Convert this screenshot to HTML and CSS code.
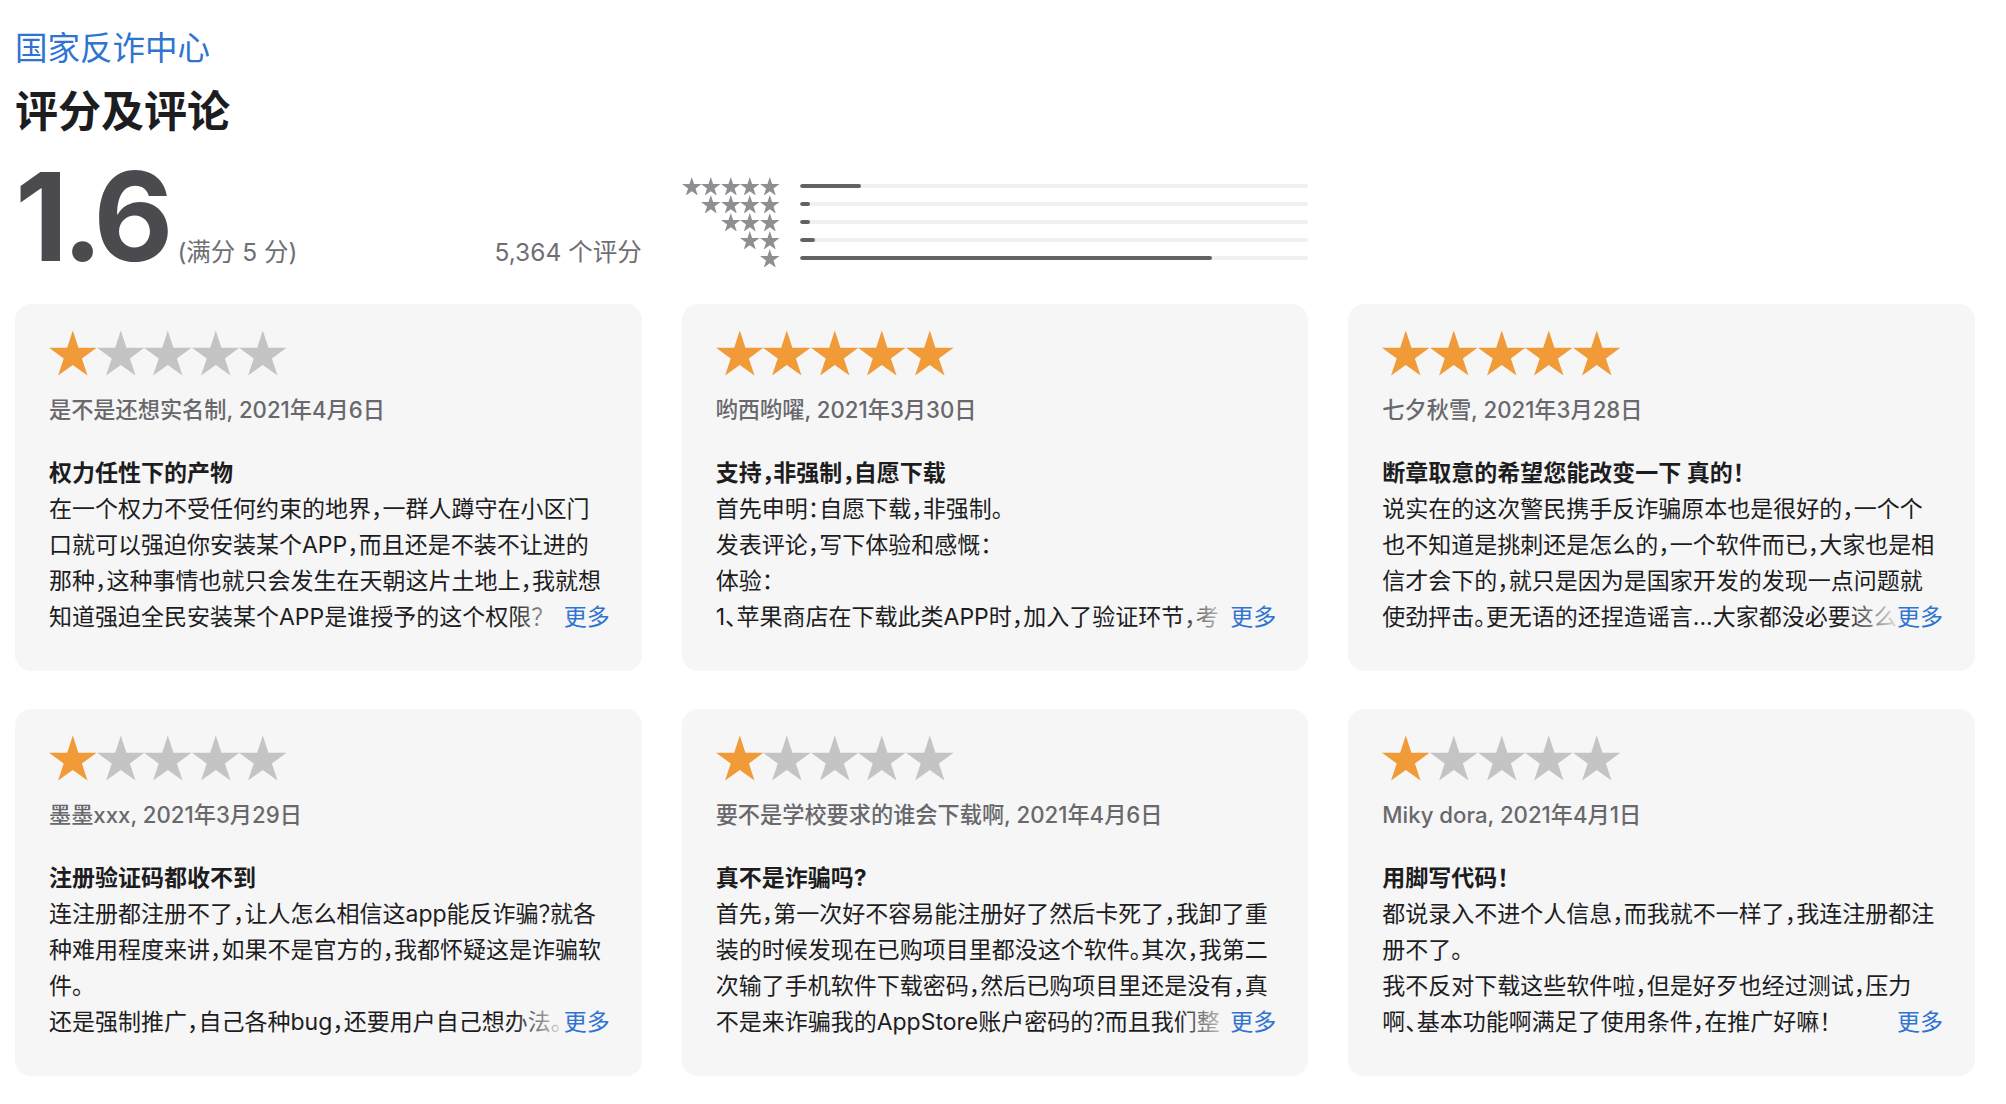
FILE: index.html
```html
<!DOCTYPE html>
<html lang="zh-CN">
<head>
<meta charset="utf-8">
<title>评分及评论</title>
<link rel="stylesheet" href="styles.css">
</head>
<body>
<svg class="defs" width="0" height="0" aria-hidden="true">
  <symbol id="star" viewBox="0 0 100 95">
    <path d="M50 0 L61.8 36.3 L100 36.3 L69.1 58.8 L80.9 95 L50 72.6 L19.1 95 L30.9 58.8 L0 36.3 L38.2 36.3 Z"/>
  </symbol>
</svg>
<div class="page">
  <a class="app-link" href="#">国家反诈中心</a>
  <h2 class="section-title">评分及评论</h2>

  <div class="grid stats">
    <div class="averages">
      <div class="avg-main">
        <span class="avg-num">1.6</span>
        <span class="avg-out">(满分 5 分)</span>
      </div>
      <div class="avg-count">5,364 个评分</div>
    </div>
    <div class="histogram">
      <div class="hrow">
        <div class="hstars"><svg><use href="#star"/></svg><svg><use href="#star"/></svg><svg><use href="#star"/></svg><svg><use href="#star"/></svg><svg><use href="#star"/></svg></div>
        <div class="hbar"><div class="hfill" style="width:12%"></div></div>
      </div>
      <div class="hrow">
        <div class="hstars"><svg><use href="#star"/></svg><svg><use href="#star"/></svg><svg><use href="#star"/></svg><svg><use href="#star"/></svg></div>
        <div class="hbar"><div class="hfill" style="width:2%"></div></div>
      </div>
      <div class="hrow">
        <div class="hstars"><svg><use href="#star"/></svg><svg><use href="#star"/></svg><svg><use href="#star"/></svg></div>
        <div class="hbar"><div class="hfill" style="width:2%"></div></div>
      </div>
      <div class="hrow">
        <div class="hstars"><svg><use href="#star"/></svg><svg><use href="#star"/></svg></div>
        <div class="hbar"><div class="hfill" style="width:3%"></div></div>
      </div>
      <div class="hrow">
        <div class="hstars"><svg><use href="#star"/></svg></div>
        <div class="hbar"><div class="hfill" style="width:81%"></div></div>
      </div>
    </div>
  </div>

  <div class="grid reviews">
    <div class="card">
      <div class="stars">
        <svg class="on"><use href="#star"/></svg><svg><use href="#star"/></svg><svg><use href="#star"/></svg><svg><use href="#star"/></svg><svg><use href="#star"/></svg>
      </div>
      <div class="byline">是不是还想实名制, 2021年4月6日</div>
      <h3 class="rtitle">权力任性下的产物</h3>
      <div class="rbody">
        <div class="line">在一个权力不受任何约束的地界，一群人蹲守在小区门</div>
        <div class="line">口就可以强迫你安装某个APP，而且还是不装不让进的</div>
        <div class="line">那种，这种事情也就只会发生在天朝这片土地上，我就想</div>
        <div class="line last">知道强迫全民安装某个APP是谁授予的这个权限？</div>
        <a class="more" href="#">更多</a>
      </div>
    </div>

    <div class="card">
      <div class="stars">
        <svg class="on"><use href="#star"/></svg><svg class="on"><use href="#star"/></svg><svg class="on"><use href="#star"/></svg><svg class="on"><use href="#star"/></svg><svg class="on"><use href="#star"/></svg>
      </div>
      <div class="byline">哟西哟嚁, 2021年3月30日</div>
      <h3 class="rtitle">支持，非强制，自愿下载</h3>
      <div class="rbody">
        <div class="line">首先申明：自愿下载，非强制。</div>
        <div class="line">发表评论，写下体验和感慨：</div>
        <div class="line">体验：</div>
        <div class="line last">1、苹果商店在下载此类APP时，加入了验证环节，考</div>
        <a class="more" href="#">更多</a>
      </div>
    </div>

    <div class="card">
      <div class="stars">
        <svg class="on"><use href="#star"/></svg><svg class="on"><use href="#star"/></svg><svg class="on"><use href="#star"/></svg><svg class="on"><use href="#star"/></svg><svg class="on"><use href="#star"/></svg>
      </div>
      <div class="byline">七夕秋雪, 2021年3月28日</div>
      <h3 class="rtitle">断章取意的希望您能改变一下 真的！</h3>
      <div class="rbody">
        <div class="line">说实在的这次警民携手反诈骗原本也是很好的，一个个</div>
        <div class="line">也不知道是挑刺还是怎么的，一个软件而已，大家也是相</div>
        <div class="line">信才会下的，就只是因为是国家开发的发现一点问题就</div>
        <div class="line last">使劲抨击。更无语的还捏造谣言...大家都没必要这么</div>
        <a class="more" href="#">更多</a>
      </div>
    </div>

    <div class="card">
      <div class="stars">
        <svg class="on"><use href="#star"/></svg><svg><use href="#star"/></svg><svg><use href="#star"/></svg><svg><use href="#star"/></svg><svg><use href="#star"/></svg>
      </div>
      <div class="byline">墨墨xxx, 2021年3月29日</div>
      <h3 class="rtitle">注册验证码都收不到</h3>
      <div class="rbody">
        <div class="line">连注册都注册不了，让人怎么相信这app能反诈骗？就各</div>
        <div class="line">种难用程度来讲，如果不是官方的，我都怀疑这是诈骗软</div>
        <div class="line">件。</div>
        <div class="line last">还是强制推广，自己各种bug，还要用户自己想办法。</div>
        <a class="more" href="#">更多</a>
      </div>
    </div>

    <div class="card">
      <div class="stars">
        <svg class="on"><use href="#star"/></svg><svg><use href="#star"/></svg><svg><use href="#star"/></svg><svg><use href="#star"/></svg><svg><use href="#star"/></svg>
      </div>
      <div class="byline">要不是学校要求的谁会下载啊, 2021年4月6日</div>
      <h3 class="rtitle">真不是诈骗吗?</h3>
      <div class="rbody">
        <div class="line">首先，第一次好不容易能注册好了然后卡死了，我卸了重</div>
        <div class="line">装的时候发现在已购项目里都没这个软件。其次，我第二</div>
        <div class="line">次输了手机软件下载密码，然后已购项目里还是没有，真</div>
        <div class="line last">不是来诈骗我的AppStore账户密码的？而且我们整</div>
        <a class="more" href="#">更多</a>
      </div>
    </div>

    <div class="card">
      <div class="stars">
        <svg class="on"><use href="#star"/></svg><svg><use href="#star"/></svg><svg><use href="#star"/></svg><svg><use href="#star"/></svg><svg><use href="#star"/></svg>
      </div>
      <div class="byline">Miky dora, 2021年4月1日</div>
      <h3 class="rtitle">用脚写代码！</h3>
      <div class="rbody">
        <div class="line">都说录入不进个人信息，而我就不一样了，我连注册都注</div>
        <div class="line">册不了。</div>
        <div class="line">我不反对下载这些软件啦，但是好歹也经过测试，压力</div>
        <div class="line last">啊、基本功能啊满足了使用条件，在推广好嘛！</div>
        <a class="more" href="#">更多</a>
      </div>
    </div>
  </div>
</div>
</body>
</html>
```

FILE: styles.css
```css
* { box-sizing: border-box; }

html, body {
  margin: 0;
  padding: 0;
  background: #ffffff;
}

body {
  font-family: Inter, "Noto Sans CJK SC", sans-serif;
  color: #1d1d1f;
  font-size: 23px;
}

.defs {
  position: absolute;
  width: 0;
  height: 0;
  overflow: hidden;
}

.page {
  width: 1960px;
  margin-left: 15px;
  padding-top: 29px;
}

.app-link {
  display: block;
  font-size: 32.5px;
  line-height: 40px;
  color: #2f74d0;
  text-decoration: none;
}

.section-title {
  margin: 16px 0 0;
  font-size: 43px;
  line-height: 52px;
  font-weight: 700;
  color: #1d1d1f;
}

.grid {
  display: grid;
  grid-template-columns: repeat(3, minmax(0, 1fr));
  column-gap: 40px;
}

/* ---- stats ---- */
.stats {
  margin-top: 30px;
  height: 100px;
}

.averages {
  display: flex;
  align-items: baseline;
  justify-content: space-between;
  height: 100px;
}

.avg-main {
  display: flex;
  align-items: baseline;
}

.avg-num {
  font-size: 123px;
  line-height: 100px;
  font-weight: 700;
  letter-spacing: -6px;
  color: #4b4b4f;
}

.avg-out {
  margin-left: 10px;
  font-size: 24.5px;
  color: #6e6e73;
}

.avg-count {
  font-size: 24.5px;
  color: #6e6e73;
}

.histogram {
  display: flex;
  flex-direction: column;
  padding-top: 10px;
}

.hrow {
  display: flex;
  align-items: center;
  height: 18px;
}

.hstars {
  width: 98px;
  display: flex;
  justify-content: flex-end;
}

.hstars svg {
  width: 19.6px;
  height: 18.6px;
  fill: #8e8e93;
}

.hbar {
  flex: 1;
  margin-left: 20px;
  height: 4px;
  border-radius: 2px;
  background: #efeff4;
  overflow: hidden;
}

.hfill {
  height: 100%;
  border-radius: 2px;
  background: #636366;
}

/* ---- reviews ---- */
.reviews {
  margin-top: 37px;
  row-gap: 38px;
}

.card {
  height: 367px;
  background: #f6f6f6;
  border-radius: 16px;
  padding: 26px 32px 0 34px;
}

.stars {
  display: flex;
  height: 47px;
}

.stars svg {
  width: 47.6px;
  height: 46px;
  fill: #c4c4c4;
}

.stars svg.on {
  fill: #f19a38;
}

.byline {
  margin-top: 15px;
  font-size: 22.2px;
  line-height: 36px;
  font-weight: 500;
  color: #68686d;
}

.rtitle {
  margin: 27px 0 0;
  font-size: 23px;
  line-height: 36px;
  font-weight: 700;
  color: #1d1d1f;
  font-feature-settings: "halt";
}

.rbody {
  position: relative;
  line-height: 36px;
  color: #1d1d1f;
  font-feature-settings: "halt";
}

.line {
  white-space: nowrap;
  overflow: hidden;
}

.line.last {
  max-width: calc(100% - 47px);
}

.more {
  position: absolute;
  right: 0;
  bottom: 0;
  line-height: 36px;
  color: #2f74d0;
  text-decoration: none;
  background: #f6f6f6;
}

.more::before {
  content: "";
  position: absolute;
  top: 0;
  bottom: 0;
  right: 100%;
  width: 52px;
  background: linear-gradient(90deg, rgba(246, 246, 246, 0), rgba(246, 246, 246, 0.9));
}
```
